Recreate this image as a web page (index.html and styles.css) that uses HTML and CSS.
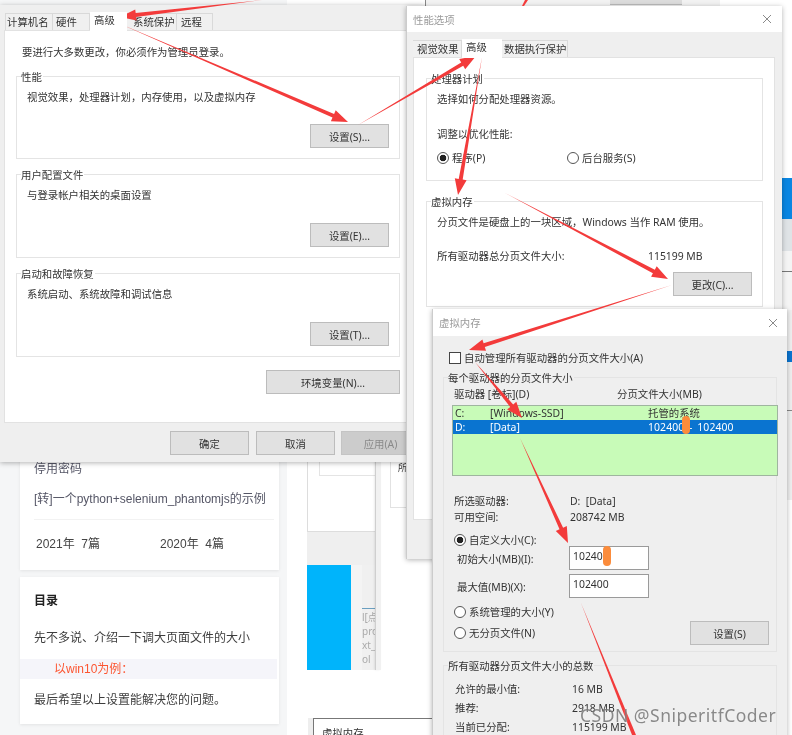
FILE: index.html
```html
<!DOCTYPE html>
<html>
  <head>
    <title>虚拟内存设置</title>
    <link rel="stylesheet" href="styles.css">
  </head>

  <body>
    <div class="desk">
      <div class="page-bg"></div>

      <div class="sidebar">
        <div class="card card-archive">
          <p class="side-link">停用密码</p>
          <p class="side-link side-link-2">[转]一个python+selenium_phantomjs的示例</p>
          <div class="archive">
            <span class="archive-item">2021年&nbsp; 7篇</span>
            <span class="archive-item">2020年&nbsp; 4篇</span>
          </div>
        </div>
        <div class="card card-toc">
          <h4 class="toc-title">目录</h4>
          <p class="toc-item">先不多说、介绍一下调大页面文件的大小</p>
          <p class="toc-item toc-current">以win10为例：</p>
          <p class="toc-item">最后希望以上设置能解决您的问题。</p>
        </div>
      </div>

      <!-- stuff peeking out behind the dialogs -->
      <div class="back-top"><div class="back-top-btn"></div></div>
      <div class="back-right">
        <div class="back-right-blue"></div>
        <div class="back-right-gray"></div>
        <div class="back-right-line"></div>
      </div>
      <div class="back-edge">
        <div class="back-edge-blue"></div>
        <div class="back-edge-line"></div>
      </div>

      <div class="back-dialog">
        <div class="back-dialog-panel"><div class="back-dialog-box"></div></div>
        <div class="back-dialog-bar"></div>
        <div class="back-dialog-lower">
          <div class="back-blue"></div>
          <div class="back-gutter"></div>
          <div class="back-code">
            <div class="back-code-rule"></div>
            <div>l[点</div>
            <div>pro</div>
            <div>xt_</div>
            <div>ol</div>
          </div>
        </div>
      </div>
      <div class="back-strip"></div>
      <div class="back-box">所</div>
      <div class="back-mini"><span>虚拟内存</span></div>

      <!-- 系统属性 -->
      <div class="win win-system">
        <div class="tabs tabs-system">
          <span class="tab">计算机名</span>
          <span class="tab">硬件</span>
          <span class="tab tab-active">高级</span>
          <span class="tab">系统保护</span>
          <span class="tab">远程</span>
        </div>
        <div class="panel panel-system">
          <p class="line">要进行大多数更改，你必须作为管理员登录。</p>
          <div class="group group-sys group-first">
            <div class="legend">性能</div>
            <p class="line note">视觉效果，处理器计划，内存使用，以及虚拟内存</p>
            <button class="btn btn-end">设置(S)...</button>
          </div>
          <div class="group group-sys">
            <div class="legend">用户配置文件</div>
            <p class="line note">与登录帐户相关的桌面设置</p>
            <button class="btn btn-end">设置(E)...</button>
          </div>
          <div class="group group-sys">
            <div class="legend">启动和故障恢复</div>
            <p class="line note">系统启动、系统故障和调试信息</p>
            <button class="btn btn-end">设置(T)...</button>
          </div>
          <button class="btn btn-env">环境变量(N)...</button>
        </div>
        <div class="footer">
          <button class="btn">确定</button>
          <button class="btn">取消</button>
          <button class="btn btn-disabled">应用(A)</button>
        </div>
      </div>

      <!-- 性能选项 -->
      <div class="win win-perf">
        <div class="titlebar">
          <span class="title">性能选项</span>
          <svg class="close" width="10" height="10" viewBox="0 0 10 10"><path d="M1 1 9 9M9 1 1 9" stroke="#8a8a8a" fill="none"/></svg>
        </div>
        <div class="tabs tabs-perf">
          <span class="tab">视觉效果</span>
          <span class="tab tab-active">高级</span>
          <span class="tab">数据执行保护</span>
        </div>
        <div class="panel panel-perf">
          <div class="group group-cpu">
            <div class="legend">处理器计划</div>
            <p class="line cpu-a">选择如何分配处理器资源。</p>
            <p class="line cpu-b">调整以优化性能:</p>
            <div class="cpu-radios">
              <label class="radio-row"><i class="radio radio-on"></i>程序(P)</label>
              <label class="radio-row"><i class="radio"></i>后台服务(S)</label>
            </div>
          </div>
          <div class="group group-vm">
            <div class="legend">虚拟内存</div>
            <p class="line cpu-a">分页文件是硬盘上的一块区域，Windows 当作 RAM 使用。</p>
            <div class="vm-total line">
              <span>所有驱动器总分页文件大小:</span>
              <span>115199 MB</span>
            </div>
            <button class="btn btn-change">更改(C)...</button>
          </div>
        </div>
      </div>

      <!-- 虚拟内存 -->
      <div class="win win-vm">
        <div class="titlebar titlebar-vm">
          <span class="title">虚拟内存</span>
          <svg class="close" width="10" height="10" viewBox="0 0 10 10"><path d="M1 1 9 9M9 1 1 9" stroke="#8a8a8a" fill="none"/></svg>
        </div>
        <div class="vm-body">
          <label class="auto-row"><i class="check"></i>自动管理所有驱动器的分页文件大小(A)</label>
          <div class="group group-each">
            <div class="legend legend-gray">每个驱动器的分页文件大小</div>
            <div class="drive-head line">
              <span>驱动器 [卷标](D)</span>
              <span>分页文件大小(MB)</span>
            </div>
            <div class="drive-list">
              <div class="drive-row">
                <span>C:</span><span>[Windows-SSD]</span><span>托管的系统</span>
              </div>
              <div class="drive-row drive-selected">
                <span>D:</span><span>[Data]</span><span class="drive-size">102400 - 102400</span>
              </div>
              <div class="blob blob-list"></div>
            </div>
            <div class="info line info-first"><span>所选驱动器:</span><span>D:&nbsp; [Data]</span></div>
            <div class="info line"><span>可用空间:</span><span>208742 MB</span></div>
            <label class="radio-row radio-custom"><i class="radio radio-on"></i>自定义大小(C):</label>
            <div class="size-row">
              <span class="size-label">初始大小(MB)(I):</span>
              <div class="field">10240<div class="blob blob-field"></div></div>
            </div>
            <div class="size-row size-row-2">
              <span class="size-label">最大值(MB)(X):</span>
              <div class="field">102400</div>
            </div>
            <label class="radio-row radio-system"><i class="radio"></i>系统管理的大小(Y)</label>
            <div class="set-row">
              <label class="radio-row"><i class="radio"></i>无分页文件(N)</label>
              <button class="btn">设置(S)</button>
            </div>
          </div>
          <div class="group group-total">
            <div class="legend legend-gray">所有驱动器分页文件大小的总数</div>
            <div class="total line total-first"><span>允许的最小值:</span><span>16 MB</span></div>
            <div class="total line"><span>推荐:</span><span>2918 MB</span></div>
            <div class="total line"><span>当前已分配:</span><span>115199 MB</span></div>
          </div>
        </div>
      </div>

      <svg class="arrows" width="792" height="735" viewBox="0 0 792 735">
        <polygon points="262,0 135.7,13.1 135.2,9.6 120,17 136.6,20.6 136.1,17.1"/>
        <polygon points="118,23 334.1,113.9 335.7,110.2 348,122 330.9,121.2 332.5,117.5"/>
        <polygon points="358,125 461.2,62.4 459.2,58.9 476,56 465.2,69.3 463.2,65.8"/>
        <polygon points="482,57 462.7,179.5 466.6,180.2 458,195 454.8,178.2 458.7,178.9"/>
        <polygon points="505,193 654.8,269.7 656.7,266.2 668,279 651.1,276.8 652.9,273.3"/>
        <polygon points="672,285 483.6,343.2 482.4,339.4 469,350 486,350.8 484.8,347"/>
        <polygon points="475,362 513.2,404.4 516.3,401.8 522,418 507.1,409.6 510.2,407"/>
        <polygon points="520,438 563.1,527.7 566.8,526 568,543 555.8,531 559.5,529.3"/>
        <polygon points="581,603 636,735 632,735"/>
        <polygon points="525,0 528,0 524,6 522,6"/>
      </svg>

      <div class="watermark">CSDN @SniperitfCoder</div>
    </div>
  </body>
</html>
```

FILE: styles.css
```css
* {
  box-sizing: border-box;
}

body {
  margin: 0;
  background: #fff;
  font-family: "Noto Sans", "Noto Sans CJK SC", sans-serif;
  font-size: 10.4px;
  color: #333;
}

p, h4 {
  margin: 0;
}

.desk {
  position: relative;
  width: 792px;
  height: 735px;
  overflow: hidden;
  background: #fff;
  filter: blur(0.5px);
}

.page-bg {
  position: absolute;
  left: 0;
  top: 0;
  width: 287px;
  height: 735px;
  background: #f5f6f7;
}

/* blog sidebar */
.sidebar {
  position: absolute;
  left: 20px;
  top: 440px;
  width: 259px;
  display: flex;
  flex-direction: column;
  gap: 7px;
  font-family: "Liberation Sans", "Noto Sans CJK SC", sans-serif;
  font-size: 12px;
}

.card {
  background: #fff;
  box-shadow: 0 1px 3px rgba(0, 0, 0, 0.08);
  padding: 0 5px 0 14px;
}

.card-archive {
  height: 130px;
  padding-top: 22px;
  color: #555666;
}

.side-link {
  line-height: 14px;
}

.side-link-2 {
  margin-top: 16px;
}

.archive {
  display: grid;
  grid-template-columns: 124px 100px;
  margin-top: 13px;
  padding: 16px 0 0 2px;
  border-top: 1px solid #f2f2f2;
  line-height: 16px;
  color: #444;
}

.card-toc {
  height: 147px;
  padding-top: 16px;
}

.toc-title {
  font-size: 12px;
  line-height: 16px;
  font-weight: 700;
  color: #222;
}

.toc-item {
  line-height: 14px;
  margin-top: 22px;
  color: #3d3d3d;
}

.toc-current {
  margin: 14px -3px 14px -14px;
  padding: 3px 0 3px 34px;
  height: 20px;
  background: #f5f5fa;
  color: #fc5531;
}

.toc-current + .toc-item {
  margin-top: 0;
}

/* pieces of other windows */
.back-top {
  position: absolute;
  left: 425px;
  top: 0;
  width: 295px;
  height: 8px;
  background: #f2f2f2;
  border-left: 1px solid #888;
  padding-left: 184px;
}

.back-top-btn {
  width: 72px;
  height: 5px;
  background: #dcdcdc;
  border-bottom: 1px solid #bbb;
}

.back-right {
  position: absolute;
  left: 780px;
  top: 178px;
  width: 12px;
  height: 132px;
  background: #f4f4f4;
}

.back-right-blue {
  height: 41px;
  background: #0a86e2;
}

.back-right-gray {
  height: 32px;
  background: #dfe3e6;
}

.back-right-line {
  margin-top: 20px;
  height: 1px;
  background: #777;
}

.back-edge {
  position: absolute;
  left: 785px;
  top: 310px;
  width: 7px;
  height: 190px;
  background: #efefef;
  padding-top: 41px;
}

.back-edge-blue {
  height: 11px;
  background: #0a74d0;
}

.back-edge-line {
  margin-top: 48px;
  height: 1px;
  background: #888;
}

.back-dialog {
  position: absolute;
  left: 307px;
  top: 440px;
  width: 68px;
}

.back-dialog-panel {
  height: 92px;
  background: #fff;
  border-left: 1px solid #ddd;
  border-bottom: 1px solid #ddd;
  padding: 0 0 0 11px;
}

.back-dialog-box {
  height: 36px;
  border: 1px solid #e4e4e4;
  border-right: none;
}

.back-dialog-bar {
  height: 33px;
  background: #efefef;
}

.back-dialog-lower {
  display: flex;
  height: 105px;
}

.back-blue {
  width: 44px;
  background: #00b4fb;
}

.back-gutter {
  width: 11px;
  background: #f4f4f4;
}

.back-code {
  width: 13px;
  background: #f0f0f0;
  padding-top: 43px;
  font-size: 10px;
  line-height: 14px;
  color: #aaa;
  overflow: hidden;
}

.back-code-rule {
  height: 1px;
  background: #6a9fc0;
  margin-bottom: 1px;
}

.back-strip {
  position: absolute;
  left: 375px;
  top: 440px;
  width: 6px;
  height: 230px;
  background: #f1f1f1;
  border-left: 1px solid #cfcfcf;
  box-shadow: -1px 0 2px rgba(0, 0, 0, 0.08);
}

.back-box {
  position: absolute;
  left: 390px;
  top: 440px;
  width: 30px;
  height: 68px;
  border: 1px solid #e2e2e2;
  padding: 21px 0 0 7px;
  font-size: 9px;
  line-height: 12px;
  color: #333;
}

.back-mini {
  position: absolute;
  left: 313px;
  top: 718px;
  width: 125px;
  height: 30px;
  background: #fff;
  border: 1px solid #777;
  box-shadow: -5px 0 0 #eee;
  padding: 6px 0 0 8px;
}

/* dialogs */
.win {
  position: absolute;
  background: #efefef;
  box-shadow: 0 1px 5px rgba(0, 0, 0, 0.3);
}

.win-system {
  left: 0;
  top: 5px;
  width: 424px;
  height: 457px;
}

.win-perf {
  left: 406px;
  top: 6px;
  width: 376px;
  height: 553px;
  border-left: 1px solid #ccc;
}

.win-vm {
  left: 432px;
  top: 309px;
  width: 355px;
  height: 460px;
  border-left: 1px solid #ccc;
}

.titlebar {
  display: flex;
  justify-content: space-between;
  align-items: center;
  height: 26px;
  padding: 0 10px 0 6px;
  background: #fff;
}

.titlebar-vm {
  height: 27px;
  padding-right: 9px;
}

.title {
  color: #9a9a9a;
}

.tabs {
  display: flex;
  height: 17px;
  line-height: 16px;
}

.tabs-system {
  margin: 8px 0 0 5px;
}

.tabs-perf {
  margin: 8px 0 0 6px;
}

.tab {
  position: relative;
  padding: 0 3px;
  background: #f0f0f0;
  border: 1px solid #d9d9d9;
  border-bottom: none;
  border-left-width: 0;
  white-space: nowrap;
}

.tabs-system .tab:nth-child(1) {
  width: 48px;
  padding-left: 1px;
  border-left-width: 1px;
}

.tabs-system .tab:nth-child(2) {
  width: 37px;
}

.tabs-system .tab:nth-child(3) {
  width: 37px;
  padding-left: 4px;
}

.tabs-system .tab:nth-child(4) {
  width: 50px;
  padding-left: 6px;
}

.tabs-system .tab:nth-child(5) {
  width: 36px;
  padding-left: 4px;
}

.tabs-perf .tab:nth-child(1) {
  width: 49px;
  padding-left: 4px;
}

.tabs-perf .tab:nth-child(2) {
  width: 40px;
  padding-left: 4px;
}

.tabs-perf .tab:nth-child(3) {
  width: 66px;
  padding-left: 2px;
}

.tab-active {
  background: #fff;
  margin-top: -1px;
  height: 19px;
  z-index: 1;
  border: none;
}

.panel {
  background: #fff;
  border: 1px solid #e2e2e2;
}

.panel-system {
  width: 416px;
  height: 393px;
  margin-left: 4px;
  padding: 14px 0 0 11px;
}

.panel-perf {
  width: 362px;
  height: 463px;
  margin-left: 6px;
  padding: 20px 0 0 12px;
}

.line {
  line-height: 14px;
}

.panel-system > .line {
  margin-left: 6px;
}

.group {
  border: 1px solid #e4e4e4;
  padding: 0 10px;
}

.legend {
  width: fit-content;
  height: 14px;
  margin: -7px 0 0 -6px;
  padding: 0 1px 0 0;
  line-height: 14px;
  background: #fff;
}

.legend-gray {
  background: #efefef;
}

.group-sys {
  display: flex;
  flex-direction: column;
  width: 384px;
  height: 84px;
  margin-top: 15px;
}

.group-first {
  height: 83px;
  margin-top: 17px;
}

.note {
  margin-top: 6px;
}

.btn {
  width: 79px;
  height: 24px;
  padding: 0;
  border: 1px solid #bcbcbc;
  background: #e1e1e1;
  font: inherit;
  color: #333;
}

.btn-end {
  align-self: flex-end;
  margin-top: auto;
  margin-bottom: 10px;
}

.btn-env {
  display: block;
  width: 134px;
  margin: 13px 0 0 250px;
}

.footer {
  display: flex;
  gap: 7px;
  padding: 8px 0 0 170px;
}

.btn-disabled {
  margin-left: -1px;
  background: #cccccc;
  border-color: #c4c4c4;
  color: #8a8a8a;
}

.group-cpu {
  width: 337px;
  height: 103px;
}

.group-vm {
  width: 337px;
  height: 106px;
  margin-top: 20px;
}

.cpu-a {
  margin-top: 6px;
}

.cpu-b {
  margin-top: 21px;
}

.cpu-radios {
  display: grid;
  grid-template-columns: 130px 130px;
  margin-top: 10px;
}

.radio-row {
  display: flex;
  align-items: center;
  gap: 3px;
  line-height: 14px;
}

.radio {
  width: 12px;
  height: 12px;
  border: 1px solid #555;
  border-radius: 50%;
  background: #fff;
}

.radio-on {
  background: radial-gradient(circle, #222 0 3px, #fff 3.6px);
}

.vm-total {
  display: grid;
  grid-template-columns: 211px 80px;
  margin-top: 20px;
}

.btn-change {
  display: block;
  margin: 9px 0 0 236px;
}

.vm-body {
  padding: 15px 0 0 10px;
}

.auto-row {
  display: flex;
  align-items: center;
  gap: 3px;
  margin-left: 6px;
  line-height: 14px;
}

.check {
  width: 12px;
  height: 12px;
  border: 1px solid #444;
  background: #fff;
}

.group-each {
  width: 334px;
  height: 275px;
  margin-top: 12px;
  padding: 0 7px 0 10px;
}

.drive-head {
  display: grid;
  grid-template-columns: 163px 140px;
  margin-top: 2px;
}

.drive-list {
  position: relative;
  width: 326px;
  height: 71px;
  margin: 4px 0 0 -2px;
  background: #c8fbb8;
  border: 1px solid #9fb59f;
}

.drive-row {
  display: grid;
  grid-template-columns: 35px 158px 120px;
  height: 14px;
  padding-left: 2px;
  line-height: 14px;
}

.drive-selected {
  background: #0a74d0;
  color: #fff;
}

.drive-size {
  word-spacing: 2px;
  letter-spacing: 0.1px;
}

.blob {
  position: absolute;
  background: #fb8c3c;
  border-radius: 4px;
}

.blob-list {
  left: 229px;
  top: 10px;
  width: 8px;
  height: 18px;
}

.blob-field {
  left: 33px;
  top: -1px;
  width: 8px;
  height: 20px;
}

.info {
  display: grid;
  grid-template-columns: 116px 120px;
}

.info-first {
  margin-top: 18px;
}

.info + .info {
  margin-top: 2px;
}

.radio-custom {
  margin-top: 9px;
}

.size-row {
  display: flex;
  align-items: center;
  height: 24px;
  margin-top: -1px;
}

.size-row-2 {
  margin-top: 4px;
}

.size-label {
  width: 115px;
  padding-left: 3px;
}

.field {
  position: relative;
  width: 80px;
  height: 24px;
  padding: 2px 0 0 3px;
  line-height: 14px;
  background: #fff;
  border: 1px solid #9a9a9a;
}

.radio-system {
  margin-top: 7px;
}

.set-row {
  display: flex;
  justify-content: space-between;
  align-items: center;
  margin-top: 2px;
}

.group-total {
  width: 334px;
  height: 90px;
  margin-top: 13px;
  padding-left: 11px;
}

.group-total .legend {
  margin-left: -7px;
}

.total {
  display: grid;
  grid-template-columns: 117px 120px;
  margin-top: 5px;
}

.total-first {
  margin-top: 9px;
}

.arrows {
  position: absolute;
  left: 0;
  top: 0;
  fill: #f33b3b;
}

.watermark {
  position: absolute;
  left: 580px;
  top: 703px;
  font-size: 17.5px;
  line-height: 24px;
  letter-spacing: 0.5px;
  color: rgba(110, 110, 110, 0.8);
  text-shadow: 0 0 2px rgba(255, 255, 255, 0.5);
  white-space: nowrap;
}
```
